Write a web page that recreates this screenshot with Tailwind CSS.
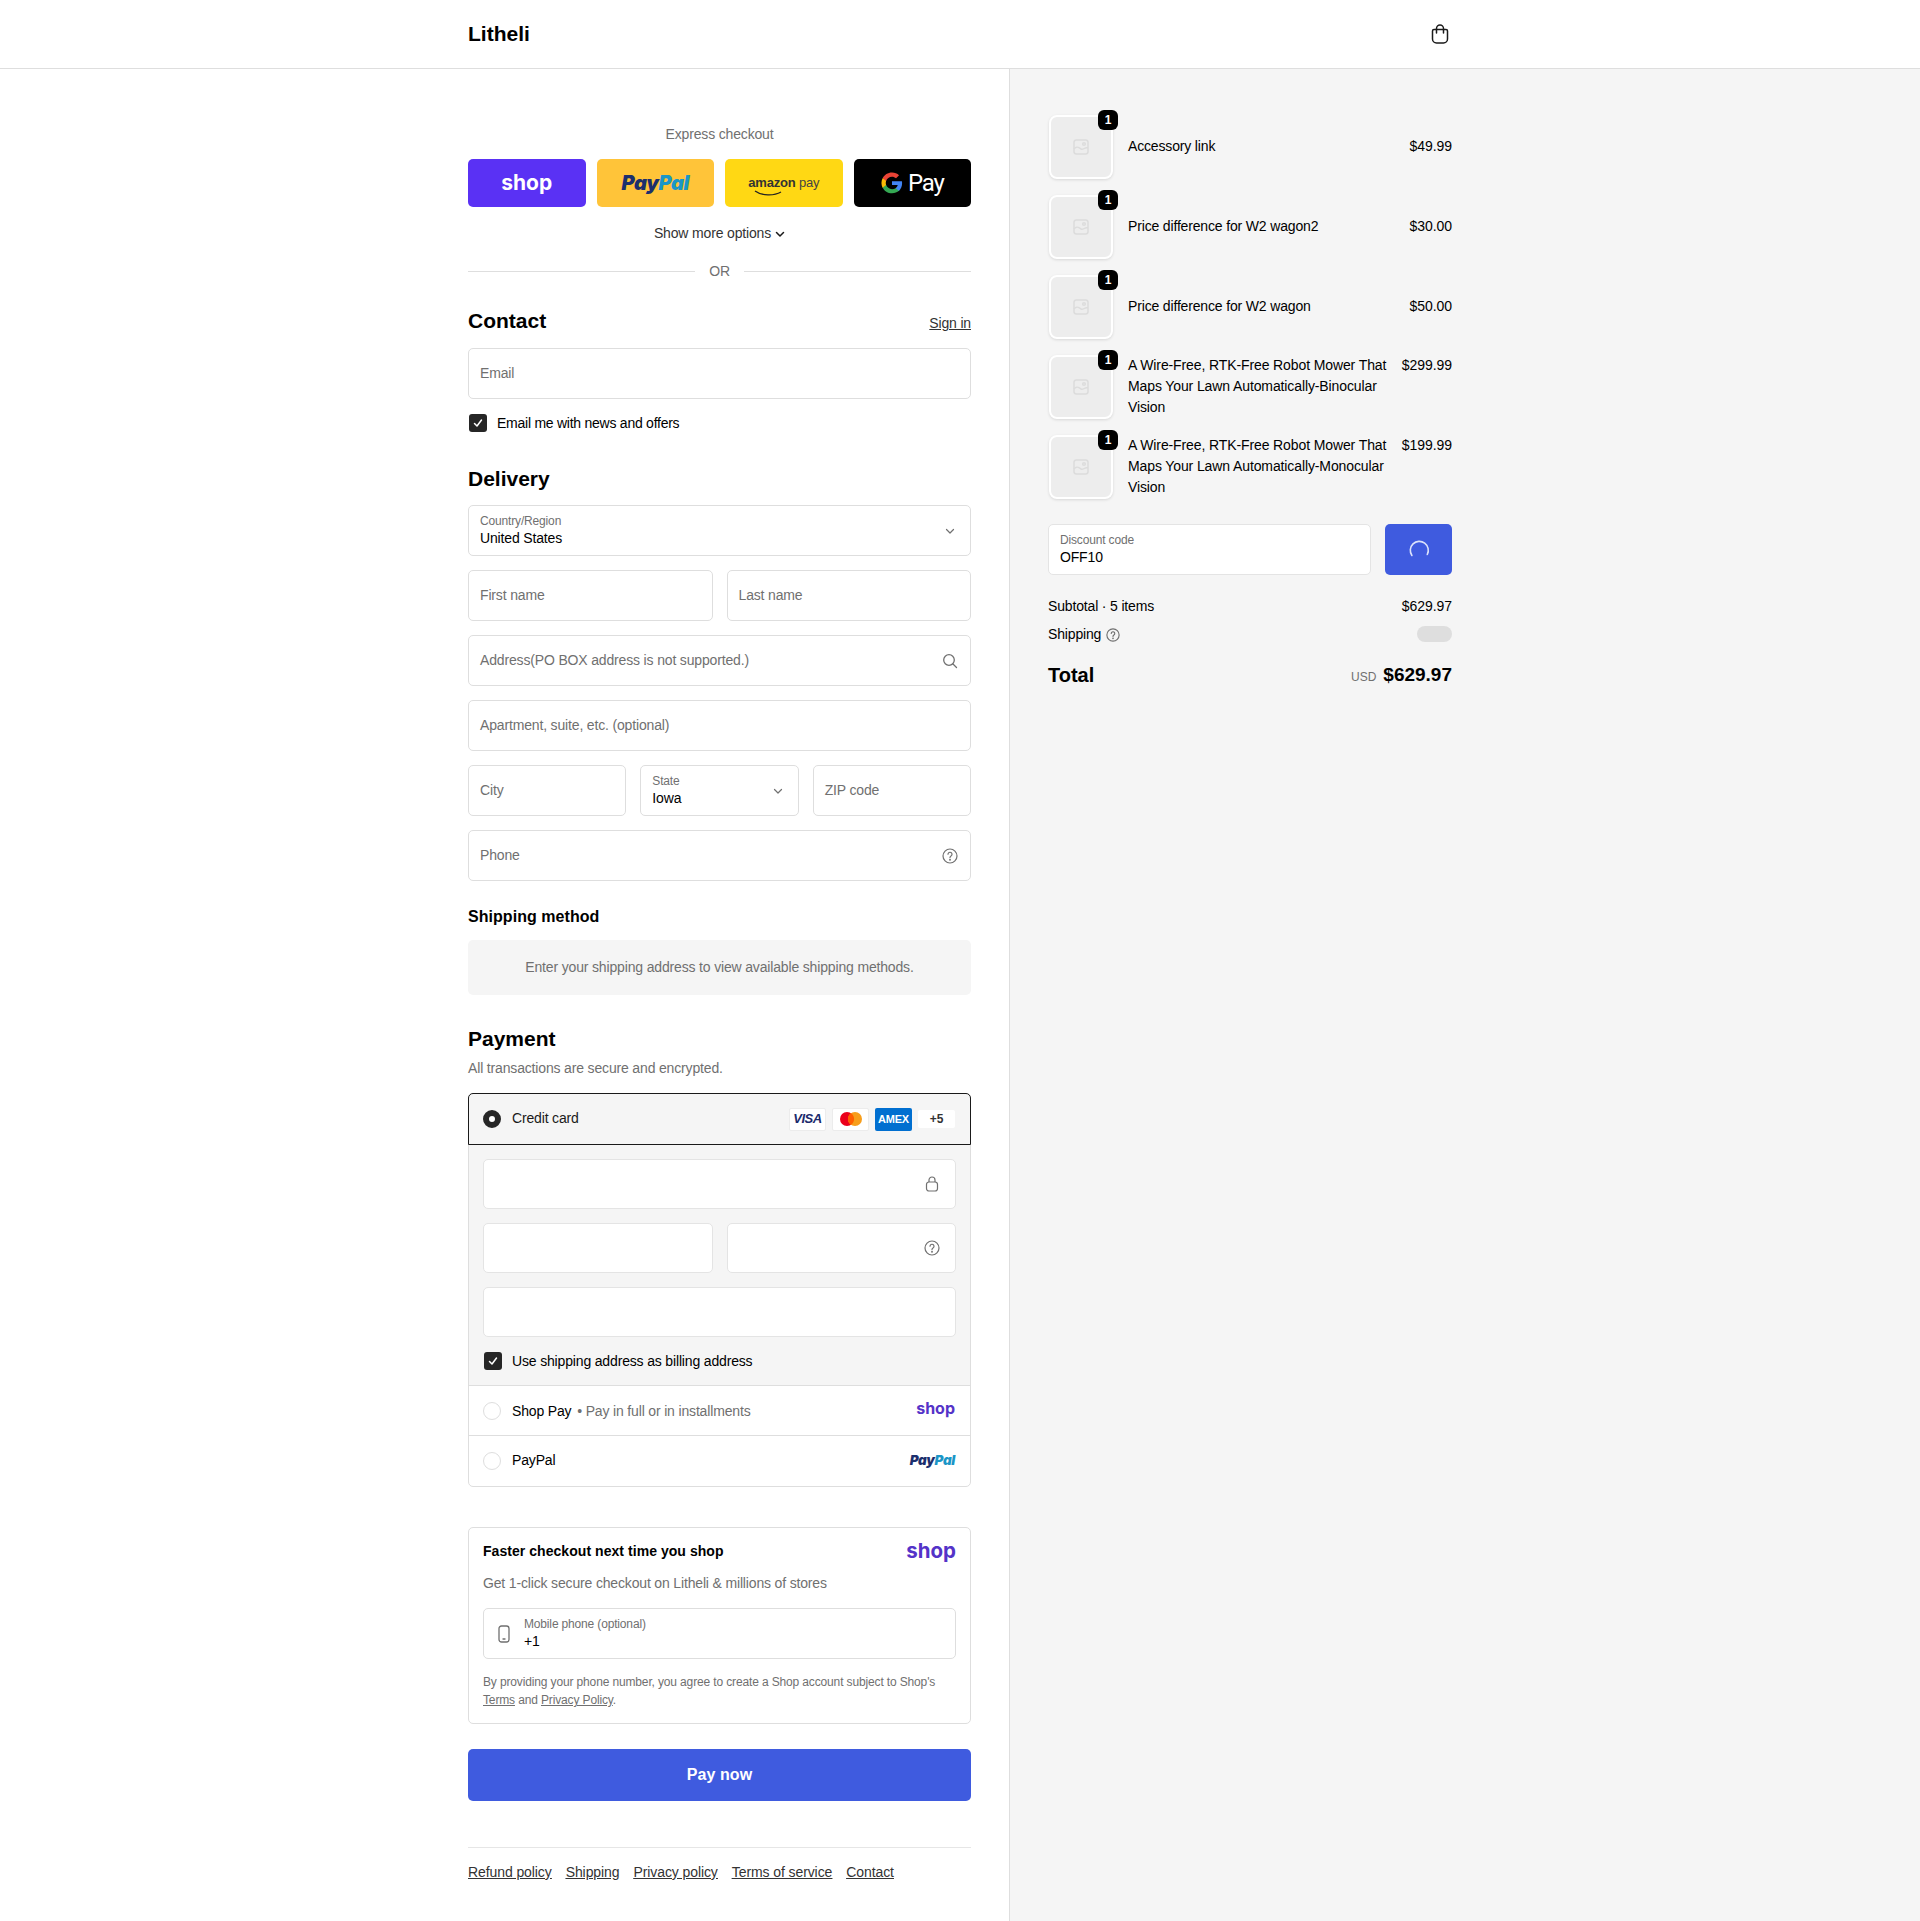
<!DOCTYPE html>
<html lang="en"><head><meta charset="utf-8"><title>Litheli checkout</title>
<script src="https://cdn.jsdelivr.net/npm/@tailwindcss/browser@4"></script></head>
<body class="bg-white font-['Liberation_Sans',Arial,sans-serif] text-[14px] leading-[20px] text-[#000] tracking-[-0.16px]">
<div class="w-[1920px] h-[1921px] flex flex-col overflow-hidden">
<header class="h-[69px] shrink-0 border-b border-[#dedede] flex items-center pl-[468px] pr-[470px] justify-between">
  <span class="text-[21px] font-bold leading-[28px] tracking-normal">Litheli</span>
  <svg class="w-[20px] h-[20px]" viewBox="0 0 20 20" fill="none" stroke="#1a1a1a" stroke-width="1.500" stroke-linecap="round" stroke-linejoin="round"><path d="M4 5.500h12a1.500 1.500 0 0 1 1.500 1.500v8a4 4 0 0 1-4 4h-7a4 4 0 0 1-4-4V7A1.500 1.500 0 0 1 4 5.500z"/><path d="M6.500 9V4.500a3.500 3.500 0 0 1 7 0V9"/></svg>
</header>
<div class="flex flex-1">
<main class="w-[1010px] shrink-0 border-r border-[#dedede] pl-[468px] pr-[38px] pt-[55px]">
  <p class="text-center text-[#707070]">Express checkout</p>
  <div class="mt-[15px] grid grid-cols-4 gap-[11px] h-[48px] tracking-normal">
    <div class="rounded-[5px] bg-[#5a31f4] flex items-center justify-center text-white"><span class="font-['Inter',sans-serif] font-bold text-[21px] leading-none mt-[-2px]">shop</span></div>
    <div class="rounded-[5px] bg-[#ffc439] flex items-center justify-center"><span class="font-['Inter',sans-serif] font-black italic text-[20px] tracking-[-0.4px] leading-none"><span class="text-[#1c2f6d]">Pay</span><span class="text-[#1b96c7]">Pal</span></span></div>
    <div class="rounded-[5px] bg-[#ffd814] flex items-center justify-center text-[#333]"><span class="relative text-[13px] leading-none pb-[2px] tracking-[-0.2px]"><span class="font-bold">amazon</span> <span class="text-[#444]">pay</span><svg class="absolute left-[6px] bottom-[-5px] w-[28px] h-[6px]" viewBox="0 0 28 6" fill="none" stroke="#222" stroke-width="1.300"><path d="M1 1c7 5 19 5 26 1"/></svg></span></div>
    <div class="rounded-[5px] bg-black flex items-center justify-center gap-[5px] text-white">
      <svg class="w-[22px] h-[22px]" viewBox="0 0 48 48"><path fill="#4285F4" d="M46 24.500c0-1.600-.1-3.100-.4-4.500H24v8.600h12.400c-.5 2.900-2.100 5.300-4.600 6.900v5.700h7.400C43.500 36.700 46 31.100 46 24.500z"/><path fill="#34A853" d="M24 46.500c6.200 0 11.400-2 15.200-5.500l-7.400-5.700c-2 1.400-4.700 2.200-7.800 2.200-6 0-11.100-4-12.900-9.500H3.500v5.900C7.200 41.800 15 46.500 24 46.500z"/><path fill="#FBBC05" d="M11.100 28.500c-.5-1.400-.7-2.900-.7-4.500s.3-3.100.7-4.500v-5.900H3.500C2 16.600 1 20.200 1 24s1 7.400 2.500 10.400z"/><path fill="#EA4335" d="M24 10.100c3.400 0 6.400 1.200 8.800 3.400l6.600-6.600C35.400 3.200 30.200 1 24 1 15 1 7.200 6.200 3.500 13.600l7.600 5.900c1.800-5.500 6.900-9.400 12.900-9.400z"/></svg>
      <span class="text-[24px] leading-none font-['Roboto',sans-serif] tracking-[-1.200px]">Pay</span></div>
  </div>
  <div class="mt-[16px] flex items-center justify-center gap-[4px] text-[#333]">Show more options
    <svg class="w-[10px] h-[10px] mt-[2px]" viewBox="0 0 10 10" fill="none" stroke="#1a1a1a" stroke-width="1.500" stroke-linecap="round" stroke-linejoin="round"><path d="M1.500 3.500 5 7l3.500-3.500"/></svg></div>
  <div class="mt-[18px] flex items-center gap-[14px] text-[#707070]"><span class="flex-1 h-px bg-[#dedede]"></span>OR<span class="flex-1 h-px bg-[#dedede]"></span></div>
  <div class="mt-[26px] flex justify-between items-center h-[28px]"><h2 class="text-[21px] font-bold tracking-normal">Contact</h2><a class="underline text-[#333] mt-[4px]">Sign in</a></div>
  <div class="mt-[13px] h-[51px] border border-[#dedede] rounded-[5px] px-[11px] pb-[2px] flex items-center text-[#707070]">Email</div>
  <label class="mt-[14px] flex items-center gap-[10px] h-[20px] tracking-[-0.25px]">
    <span class="ml-[1px] w-[18px] h-[18px] rounded-[3px] bg-[#262626] flex items-center justify-center"><svg class="w-[12px] h-[12px]" viewBox="0 0 12 12" fill="none" stroke="#fff" stroke-width="1.500" stroke-linecap="round" stroke-linejoin="round"><path d="M2.500 6.500 5 9l4.500-6"/></svg></span>Email me with news and offers</label>
  <h2 class="mt-[32px] text-[21px] font-bold leading-[28px] tracking-normal">Delivery</h2>
  <div class="mt-[12px] flex flex-col gap-[14px]">
    <div class="h-[51px] border border-[#dedede] rounded-[5px] pl-[11px] pr-[15px] flex items-center justify-between"><div><div class="text-[12px] leading-[14px] text-[#707070]">Country/Region</div><div class="leading-[17px] mt-[2px]">United States</div></div>
      <svg class="w-[10px] h-[10px]" viewBox="0 0 10 10" fill="none" stroke="#707070" stroke-width="1.200" stroke-linecap="round" stroke-linejoin="round"><path d="M1.500 3.500 5 7l3.500-3.500"/></svg></div>
    <div class="grid grid-cols-2 gap-[14px]">
      <div class="h-[51px] border border-[#dedede] rounded-[5px] px-[11px] pb-[2px] flex items-center text-[#707070]">First name</div>
      <div class="h-[51px] border border-[#dedede] rounded-[5px] px-[11px] pb-[2px] flex items-center text-[#707070]">Last name</div>
    </div>
    <div class="h-[51px] border border-[#dedede] rounded-[5px] pl-[11px] pr-[12px] flex items-center justify-between text-[#707070]"><span class="mb-[2px]">Address(PO BOX address is not supported.)</span>
      <svg class="w-[16px] h-[16px] mt-[1px]" viewBox="0 0 16 16" fill="none" stroke="#707070" stroke-width="1.300" stroke-linecap="round"><circle cx="7" cy="7" r="5.300"/><path d="m11 11 3.500 3.500"/></svg></div>
    <div class="h-[51px] border border-[#dedede] rounded-[5px] px-[11px] pb-[2px] flex items-center text-[#707070]">Apartment, suite, etc. (optional)</div>
    <div class="grid grid-cols-3 gap-[14px]">
      <div class="h-[51px] border border-[#dedede] rounded-[5px] px-[11px] pb-[2px] flex items-center text-[#707070]">City</div>
      <div class="h-[51px] border border-[#dedede] rounded-[5px] pl-[11px] pr-[15px] flex items-center justify-between"><div><div class="text-[12px] leading-[14px] text-[#707070]">State</div><div class="leading-[17px] mt-[2px]">Iowa</div></div>
        <svg class="w-[10px] h-[10px]" viewBox="0 0 10 10" fill="none" stroke="#707070" stroke-width="1.200" stroke-linecap="round" stroke-linejoin="round"><path d="M1.500 3.500 5 7l3.500-3.500"/></svg></div>
      <div class="h-[51px] border border-[#dedede] rounded-[5px] px-[11px] pb-[2px] flex items-center text-[#707070]">ZIP code</div>
    </div>
    <div class="h-[51px] border border-[#dedede] rounded-[5px] pl-[11px] pr-[12px] flex items-center justify-between text-[#707070]"><span class="mb-[2px]">Phone</span>
      <svg class="w-[16px] h-[16px] mt-[1px]" viewBox="0 0 16 16" fill="none" stroke="#707070" stroke-width="1.200" stroke-linecap="round"><circle cx="8" cy="8" r="7"/><path d="M6 6.200a2 2 0 1 1 3 1.800c-.7.400-1 .9-1 1.600"/><circle cx="8" cy="11.800" r=".4"/></svg></div>
  </div>
  <h3 class="mt-[26px] text-[16px] font-bold leading-[20px] tracking-[0.05px]">Shipping method</h3>
  <div class="mt-[13px] h-[55px] rounded-[5px] bg-[#f5f5f5] pb-[2px] flex items-center justify-center text-[#707070]">Enter your shipping address to view available shipping methods.</div>
  <h2 class="mt-[30px] text-[21px] font-bold leading-[28px] tracking-normal">Payment</h2>
  <p class="mt-[5px] text-[#707070]">All transactions are secure and encrypted.</p>
  <div class="mt-[15px] border border-[#dedede] rounded-[5px]">
    <div class="relative z-10 -m-px h-[52px] border border-[#1a1a1a] rounded-t-[5px] bg-[#f5f5f5] pl-[14px] pr-[15px] flex items-center justify-between">
      <div class="flex items-center gap-[11px]"><span class="w-[18px] h-[18px] rounded-full border-[6px] border-[#262626] bg-white"></span><span class="text-[#1a1a1a] mb-[2px]">Credit card</span></div>
      <div class="flex items-center gap-[6px] tracking-normal">
        <span class="w-[37px] h-[23px] rounded-[2px] bg-white border border-[#ececec] flex items-center justify-center font-bold italic text-[13px] text-[#1a2a6c] tracking-[-0.5px]">VISA</span>
        <span class="w-[37px] h-[23px] rounded-[2px] bg-white border border-[#ececec] flex items-center justify-center"><svg class="w-[24px] h-[16px]" viewBox="0 0 24 16"><circle cx="8" cy="8" r="7" fill="#eb001b"/><circle cx="16" cy="8" r="7" fill="#f79e1b"/><path fill="#ff5f00" d="M12 2.200a7 7 0 0 1 0 11.600 7 7 0 0 1 0-11.600z"/></svg></span>
        <span class="w-[37px] h-[23px] rounded-[2px] bg-[#016fd0] flex items-center justify-center font-bold text-[11px] text-white tracking-[-0.2px]">AMEX</span>
        <span class="w-[37px] h-[18px] rounded-[2px] bg-white flex items-center justify-center font-bold text-[12px] text-[#333]">+5</span>
      </div>
    </div>
    <div class="bg-[#f5f5f5] border-b border-[#dedede] px-[14px] pt-[15px] flex flex-col gap-[14px]">
      <div class="h-[50px] border border-[#e4e4e4] rounded-[5px] bg-white flex items-center justify-end pr-[15px]"><svg class="w-[16px] h-[16px]" viewBox="0 0 16 16" fill="none" stroke="#707070" stroke-width="1.200" stroke-linejoin="round"><rect x="2.500" y="6" width="11" height="9" rx="2.500"/><path d="M5 6V4a3 3 0 0 1 6 0v2"/></svg></div>
      <div class="grid grid-cols-2 gap-[14px]">
        <div class="h-[50px] border border-[#e4e4e4] rounded-[5px] bg-white"></div>
        <div class="h-[50px] border border-[#e4e4e4] rounded-[5px] bg-white flex items-center justify-end pr-[15px]"><svg class="w-[16px] h-[16px]" viewBox="0 0 16 16" fill="none" stroke="#707070" stroke-width="1.200" stroke-linecap="round"><circle cx="8" cy="8" r="7"/><path d="M6 6.200a2 2 0 1 1 3 1.800c-.7.400-1 .9-1 1.600"/><circle cx="8" cy="11.800" r=".4"/></svg></div>
      </div>
      <div class="h-[50px] border border-[#e4e4e4] rounded-[5px] bg-white"></div>
      <label class="flex items-center gap-[10px] h-[20px] mb-[14px] ml-px"><span class="w-[18px] h-[18px] rounded-[3px] bg-[#262626] flex items-center justify-center"><svg class="w-[12px] h-[12px]" viewBox="0 0 12 12" fill="none" stroke="#fff" stroke-width="1.500" stroke-linecap="round" stroke-linejoin="round"><path d="M2.500 6.500 5 9l4.500-6"/></svg></span>Use shipping address as billing address</label>
    </div>
    <div class="h-[50px] border-b border-[#dedede] pl-[14px] pr-[15px] flex items-center justify-between">
      <div class="flex items-center gap-[11px]"><span class="w-[18px] h-[18px] rounded-full border border-[#dedede]"></span><span>Shop Pay <span class="text-[#707070] ml-[2px]">• Pay in full or in installments</span></span></div>
      <span class="font-['Inter',sans-serif] font-bold text-[#5433c8] text-[16px] leading-none tracking-normal mb-[6px]">shop</span>
    </div>
    <div class="h-[50px] pl-[14px] pr-[15px] flex items-center justify-between">
      <div class="flex items-center gap-[11px]"><span class="w-[18px] h-[18px] rounded-full border border-[#dedede]"></span><span class="mb-[2px]">PayPal</span></div>
      <span class="font-['Inter',sans-serif] font-black italic text-[13.500px] tracking-[-0.3px] leading-none"><span class="text-[#1c2f6d]">Pay</span><span class="text-[#1b96c7]">Pal</span></span>
    </div>
  </div>
  <div class="mt-[40px] h-[197px] border border-[#dedede] rounded-[5px] px-[14px] pt-[11px]">
    <div class="flex items-center justify-between h-[24px]"><b class="text-[14px] tracking-[0.05px]">Faster checkout next time you shop</b><span class="font-['Inter',sans-serif] font-bold text-[#5433c8] text-[20.500px] leading-none tracking-normal">shop</span></div>
    <p class="mt-[10px] text-[#707070]">Get 1-click secure checkout on Litheli &amp; millions of stores</p>
    <div class="mt-[15px] h-[51px] border border-[#dedede] rounded-[5px] pl-[13px] flex items-center gap-[13px]">
      <svg class="w-[14px] h-[18px]" viewBox="0 0 14 18" fill="none" stroke="#707070" stroke-width="1.300" stroke-linecap="round"><rect x="2" y="1" width="10" height="16" rx="2.500"/><path d="M6 14h2"/></svg>
      <div><div class="text-[12px] leading-[14px] text-[#707070]">Mobile phone (optional)</div><div class="leading-[17px] mt-[2px]">+1</div></div>
    </div>
    <p class="mt-[14px] text-[12px] leading-[18px] text-[#707070] tracking-[-0.14px]">By providing your phone number, you agree to create a Shop account subject to Shop's<br><a class="underline">Terms</a> and <a class="underline">Privacy Policy</a>.</p>
  </div>
  <button class="mt-[25px] w-full h-[52px] rounded-[5px] bg-[#3f5bdf] text-white font-bold text-[16px] tracking-[0.1px]">Pay now</button>
  <div class="mt-[46px] border-t border-[#e6e6e6] pt-[14px] flex gap-[14px] text-[#333] underline tracking-[-0.09px]"><a>Refund policy</a><a>Shipping</a><a>Privacy policy</a><a>Terms of service</a><a>Contact</a></div>
</main>
<aside class="flex-1 bg-[#f5f5f5] pl-[38px] pr-[468px] pt-[46px]">
  <div class="w-[404px]">
    <div class="flex flex-col gap-[16px]">
      <div class="flex items-center gap-[15px] h-[64px] ml-px"><div class="relative shrink-0 w-[64px] h-[64px] rounded-[8px] bg-[#ededed] border-[2px] border-white shadow-[0_1px_3px_rgba(0,0,0,0.12)] flex items-center justify-center"><svg class="w-[16px] h-[16px]" viewBox="0 0 16 16" fill="none" stroke="#dcdcdc" stroke-width="1.500"><rect x="1" y="1" width="14" height="14" rx="2.500"/><path d="M1 10c3-4 5-1 7 0s4-2 7-1"/><circle cx="11" cy="5" r="1.300"/></svg><span class="absolute -top-[7px] -right-[7px] w-[20px] h-[20px] rounded-[6px] bg-black text-white text-[12px] font-bold flex items-center justify-center">1</span></div><div class="flex-1 pb-[2px]">Accessory link</div><div class="pb-[2px] tracking-[-0.04px]">$49.99</div></div>
      <div class="flex items-center gap-[15px] h-[64px] ml-px"><div class="relative shrink-0 w-[64px] h-[64px] rounded-[8px] bg-[#ededed] border-[2px] border-white shadow-[0_1px_3px_rgba(0,0,0,0.12)] flex items-center justify-center"><svg class="w-[16px] h-[16px]" viewBox="0 0 16 16" fill="none" stroke="#dcdcdc" stroke-width="1.500"><rect x="1" y="1" width="14" height="14" rx="2.500"/><path d="M1 10c3-4 5-1 7 0s4-2 7-1"/><circle cx="11" cy="5" r="1.300"/></svg><span class="absolute -top-[7px] -right-[7px] w-[20px] h-[20px] rounded-[6px] bg-black text-white text-[12px] font-bold flex items-center justify-center">1</span></div><div class="flex-1 pb-[2px]">Price difference for W2 wagon2</div><div class="pb-[2px] tracking-[-0.04px]">$30.00</div></div>
      <div class="flex items-center gap-[15px] h-[64px] ml-px"><div class="relative shrink-0 w-[64px] h-[64px] rounded-[8px] bg-[#ededed] border-[2px] border-white shadow-[0_1px_3px_rgba(0,0,0,0.12)] flex items-center justify-center"><svg class="w-[16px] h-[16px]" viewBox="0 0 16 16" fill="none" stroke="#dcdcdc" stroke-width="1.500"><rect x="1" y="1" width="14" height="14" rx="2.500"/><path d="M1 10c3-4 5-1 7 0s4-2 7-1"/><circle cx="11" cy="5" r="1.300"/></svg><span class="absolute -top-[7px] -right-[7px] w-[20px] h-[20px] rounded-[6px] bg-black text-white text-[12px] font-bold flex items-center justify-center">1</span></div><div class="flex-1 pb-[2px]">Price difference for W2 wagon</div><div class="pb-[2px] tracking-[-0.04px]">$50.00</div></div>
      <div class="flex gap-[15px] h-[64px] ml-px"><div class="relative shrink-0 w-[64px] h-[64px] rounded-[8px] bg-[#ededed] border-[2px] border-white shadow-[0_1px_3px_rgba(0,0,0,0.12)] flex items-center justify-center"><svg class="w-[16px] h-[16px]" viewBox="0 0 16 16" fill="none" stroke="#dcdcdc" stroke-width="1.500"><rect x="1" y="1" width="14" height="14" rx="2.500"/><path d="M1 10c3-4 5-1 7 0s4-2 7-1"/><circle cx="11" cy="5" r="1.300"/></svg><span class="absolute -top-[7px] -right-[7px] w-[20px] h-[20px] rounded-[6px] bg-black text-white text-[12px] font-bold flex items-center justify-center">1</span></div><div class="flex-1 leading-[21px] tracking-[-0.11px]">A Wire-Free, RTK-Free Robot Mower That Maps Your Lawn Automatically-Binocular Vision</div><div class="leading-[21px] tracking-[-0.04px]">$299.99</div></div>
      <div class="flex gap-[15px] h-[64px] ml-px"><div class="relative shrink-0 w-[64px] h-[64px] rounded-[8px] bg-[#ededed] border-[2px] border-white shadow-[0_1px_3px_rgba(0,0,0,0.12)] flex items-center justify-center"><svg class="w-[16px] h-[16px]" viewBox="0 0 16 16" fill="none" stroke="#dcdcdc" stroke-width="1.500"><rect x="1" y="1" width="14" height="14" rx="2.500"/><path d="M1 10c3-4 5-1 7 0s4-2 7-1"/><circle cx="11" cy="5" r="1.300"/></svg><span class="absolute -top-[7px] -right-[7px] w-[20px] h-[20px] rounded-[6px] bg-black text-white text-[12px] font-bold flex items-center justify-center">1</span></div><div class="flex-1 leading-[21px] tracking-[-0.11px]">A Wire-Free, RTK-Free Robot Mower That Maps Your Lawn Automatically-Monocular Vision</div><div class="leading-[21px] tracking-[-0.04px]">$199.99</div></div>
    </div>
    <div class="mt-[25px] flex gap-[14px]">
      <div class="flex-1 h-[51px] border border-[#e4e4e4] rounded-[5px] bg-white px-[11px] flex flex-col justify-center"><div class="text-[12px] leading-[14px] text-[#707070]">Discount code</div><div class="leading-[17px] mt-[2px]">OFF10</div></div>
      <div class="w-[67px] h-[51px] rounded-[5px] bg-[#3f5bdf] flex items-center justify-center"><svg class="w-[22px] h-[22px]" viewBox="0 0 22 22" fill="none" stroke="#dbe2fb" stroke-width="1.600" stroke-linecap="round"><path d="M3.900 16.500a9 9 0 1 1 15.400-1"/></svg></div>
    </div>
    <div class="mt-[21px] flex justify-between h-[20px]"><span>Subtotal · 5 items</span><span class="tracking-[-0.04px]">$629.97</span></div>
    <div class="mt-[8px] flex justify-between items-center h-[20px]"><span class="flex items-center gap-[5px]">Shipping <svg class="w-[14px] h-[14px] mt-[1px]" viewBox="0 0 16 16" fill="none" stroke="#707070" stroke-width="1.300" stroke-linecap="round"><circle cx="8" cy="8" r="7"/><path d="M6 6.200a2 2 0 1 1 3 1.800c-.7.400-1 .9-1 1.600"/><circle cx="8" cy="11.800" r=".4"/></svg></span><span class="w-[35px] h-[16px] rounded-[8px] bg-[#dedede]"></span></div>
    <div class="mt-[18px] flex justify-between items-center h-[28px] tracking-normal"><b class="text-[20px] mb-[2px]">Total</b><span class="flex items-baseline gap-[7px]"><span class="text-[12px] text-[#707070]">USD</span><b class="text-[19px]">$629.97</b></span></div>
  </div>
</aside>
</div>
</div>
</body></html>
